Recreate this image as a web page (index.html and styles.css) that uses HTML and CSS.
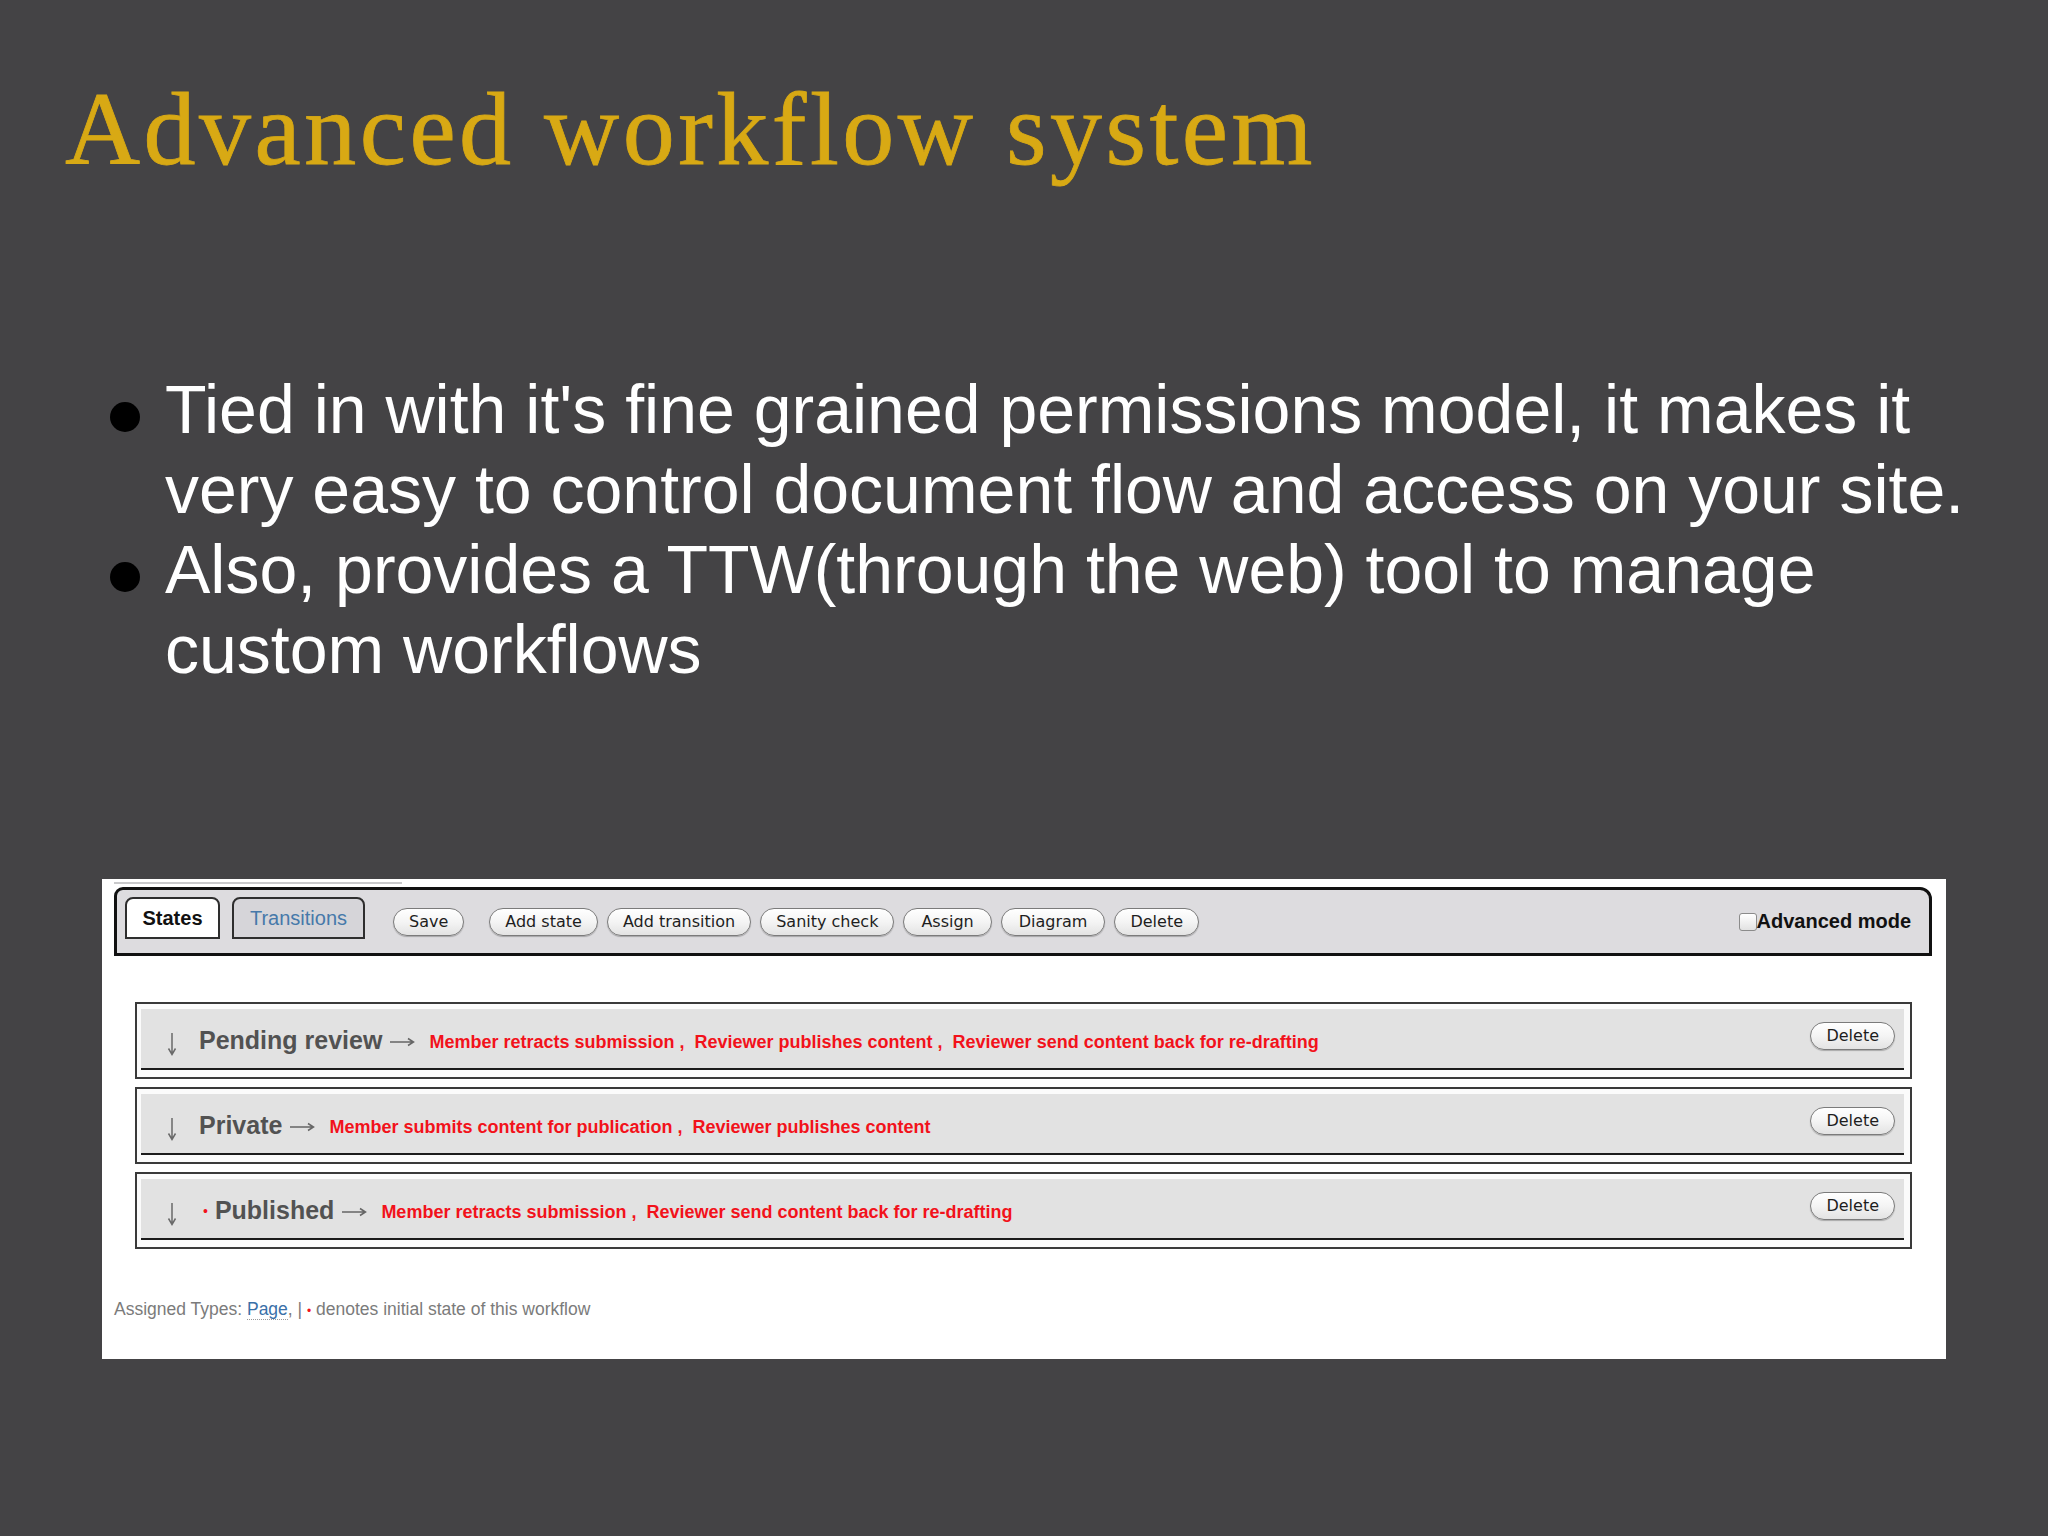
FILE: index.html
```html
<!DOCTYPE html>
<html lang="en">
<head>
<meta charset="utf-8">
<title>Advanced workflow system</title>
<link rel="stylesheet" href="styles.css">
</head>
<body>
<div class="slide">
  <h1 class="title">Advanced workflow system</h1>
  <ul class="bullets">
    <li><span class="dot"></span><span class="btext">Tied in with it's fine grained permissions model, it makes it very easy to control document flow and access on your site.</span></li>
    <li><span class="dot"></span><span class="btext">Also, provides a TTW(through the web) tool to manage custom workflows</span></li>
  </ul>
  <div class="panel">
    <div class="topline"></div>
    <div class="toolbar">
      <div class="tab active">States</div>
      <div class="tab">Transitions</div>
      <div class="btns">
        <span class="pill save">Save</span>
        <span class="pill">Add state</span>
        <span class="pill">Add transition</span>
        <span class="pill">Sanity check</span>
        <span class="pill wide">Assign</span>
        <span class="pill wide">Diagram</span>
        <span class="pill">Delete</span>
      </div>
      <div class="adv"><span class="check"></span>Advanced mode</div>
    </div>
    <div class="rows">
      <div class="row">
        <div class="row-inner">
          <svg class="down" viewBox="0 0 12 24" width="12" height="24"><path d="M6 1 V22 M2.5 16.5 L6 22.5 L9.5 16.5"/></svg>
          <span class="state">Pending review</span>
          <svg class="to" viewBox="0 0 26 12" width="26" height="12"><path d="M1 6 H24 M19 2.5 L24.5 6 L19 9.5"/></svg>
          <span class="trans">Member retracts submission</span><span class="sep">,</span><span class="trans">Reviewer publishes content</span><span class="sep">,</span><span class="trans">Reviewer send content back for re-drafting</span>
          <span class="pill del">Delete</span>
        </div>
      </div>
      <div class="row">
        <div class="row-inner">
          <svg class="down" viewBox="0 0 12 24" width="12" height="24"><path d="M6 1 V22 M2.5 16.5 L6 22.5 L9.5 16.5"/></svg>
          <span class="state">Private</span>
          <svg class="to" viewBox="0 0 26 12" width="26" height="12"><path d="M1 6 H24 M19 2.5 L24.5 6 L19 9.5"/></svg>
          <span class="trans">Member submits content for publication</span><span class="sep">,</span><span class="trans">Reviewer publishes content</span>
          <span class="pill del">Delete</span>
        </div>
      </div>
      <div class="row">
        <div class="row-inner">
          <svg class="down" viewBox="0 0 12 24" width="12" height="24"><path d="M6 1 V22 M2.5 16.5 L6 22.5 L9.5 16.5"/></svg>
          <span class="init">•</span>
          <span class="state state-init">Published</span>
          <svg class="to" viewBox="0 0 26 12" width="26" height="12"><path d="M1 6 H24 M19 2.5 L24.5 6 L19 9.5"/></svg>
          <span class="trans">Member retracts submission</span><span class="sep">,</span><span class="trans">Reviewer send content back for re-drafting</span>
          <span class="pill del">Delete</span>
        </div>
      </div>
    </div>
    <div class="footer">Assigned Types: <span class="link">Page</span>, | <span class="red-dot">•</span> denotes initial state of this workflow</div>
  </div>
</div>
</body>
</html>
```
FILE: styles.css
```css
html, body {
  margin: 0;
  padding: 0;
  background: #444345;
}
.slide {
  width: 2048px;
  height: 1536px;
  background: #444345;
  padding-top: 77px;
  box-sizing: border-box;
  overflow: hidden;
}
.title {
  margin: 0 0 0 65px;
  font-family: "Liberation Serif", "Times New Roman", serif;
  font-weight: normal;
  font-size: 104px;
  line-height: 104px;
  letter-spacing: 3.5px;
  color: #d8a914;
  font-variant-ligatures: none;
  -webkit-text-stroke: 0.8px #d8a914;
}
.bullets {
  list-style: none;
  margin: 188px 0 0 0;
  padding: 0 0 0 110px;
  font-family: "Liberation Sans", Arial, sans-serif;
  font-size: 68px;
  line-height: 80px;
  color: #ffffff;
}
.bullets li {
  display: flex;
  align-items: flex-start;
}
.dot {
  flex: none;
  width: 30px;
  height: 30px;
  border-radius: 50%;
  background: #000;
  margin: 33px 25px 0 0;
}
.btext {
  width: 1850px;
}
.panel {
  margin: 190px 0 0 102px;
  width: 1844px;
  height: 480px;
  background: #ffffff;
  box-sizing: border-box;
  padding: 3px 14px 0 12px;
  overflow: hidden;
}
.topline {
  width: 288px;
  height: 2px;
  background: #c9c9cb;
}
.toolbar {
  margin-top: 3px;
  height: 69px;
  box-sizing: border-box;
  border: 3px solid #111;
  border-radius: 9px 12px 0 0;
  background: #dddcdf;
  display: flex;
  align-items: center;
  padding: 0 18px 0 8px;
}
.tab {
  height: 42px;
  box-sizing: border-box;
  border: 2px solid #2e2e2e;
  border-radius: 8px 8px 0 0;
  display: flex;
  align-items: center;
  justify-content: center;
  font-family: "Liberation Sans", Arial, sans-serif;
  font-size: 20px;
  align-self: flex-start;
  margin-top: 7px;
  padding-top: 1px;
}
.tab.active {
  width: 95px;
  background: #ffffff;
  color: #111;
  font-weight: bold;
}
.tab + .tab {
  width: 133px;
  margin-left: 12px;
  background: #d6d5d9;
  color: #4679aa;
}
.btns {
  display: flex;
  gap: 9px;
  margin-left: 28px;
}
.save {
  margin-right: 16px;
  padding: 0 13px;
}
.pill {
  display: inline-flex;
  align-items: center;
  height: 28px;
  box-sizing: border-box;
  padding: 0 15px;
  border: 1px solid #7b7b7b;
  border-radius: 14px;
  background: linear-gradient(#ffffff, #f4f4f4 50%, #e3e3e3);
  box-shadow: 0 1px 1px rgba(0, 0, 0, 0.25);
  font-family: "DejaVu Sans", sans-serif;
  font-size: 16px;
  color: #1e1e1e;
  white-space: nowrap;
}
.pill.wide {
  padding: 0 17px;
}
.adv {
  margin-left: auto;
  display: flex;
  align-items: center;
  font-family: "Liberation Sans", Arial, sans-serif;
  font-weight: bold;
  font-size: 20px;
  color: #111;
}
.check {
  width: 18px;
  height: 18px;
  box-sizing: border-box;
  border: 1px solid #8b8b8b;
  border-radius: 3px;
  background: linear-gradient(#ffffff, #e2e2e2);
}
.rows {
  display: flex;
  flex-direction: column;
  gap: 8px;
  margin: 46px 20px 0 21px;
}
.row {
  border: 2px solid #3a3a3a;
  background: #fbfbfb;
  padding: 5px 6px 7px 4px;
}
.row-inner {
  height: 61px;
  box-sizing: border-box;
  border-bottom: 2px solid #1c1c1c;
  background: #e2e2e2;
  display: flex;
  align-items: center;
  padding: 4px 9px 0 25px;
  font-family: "Liberation Sans", Arial, sans-serif;
}
.down {
  flex: none;
  margin-top: 6px;
  fill: none;
  stroke: #6a6a6a;
  stroke-width: 1.5;
}
.state {
  font-weight: bold;
  font-size: 25px;
  color: #525252;
  margin-left: 21px;
}
.state-init {
  margin-left: 7px;
}
.init {
  color: #f2121b;
  font-size: 14px;
  margin-left: 25px;
}
.to {
  flex: none;
  margin: 2px 14px 0 7px;
  fill: none;
  stroke: #666;
  stroke-width: 1.5;
}
.trans {
  font-weight: bold;
  font-size: 18px;
  color: #f2121b;
  margin-top: 3px;
}
.sep {
  font-weight: bold;
  font-size: 18px;
  color: #f2121b;
  margin: 3px 10px 0 5px;
}
.del {
  margin-left: auto;
  margin-top: -10px;
}
.footer {
  margin-top: 50px;
  font-family: "Liberation Sans", Arial, sans-serif;
  font-size: 17.5px;
  line-height: 20px;
  color: #7b7b7b;
}
.link {
  color: #3a70a8;
  border-bottom: 1px dotted #999;
}
.red-dot {
  color: #f2121b;
  font-size: 12px;
}
```
